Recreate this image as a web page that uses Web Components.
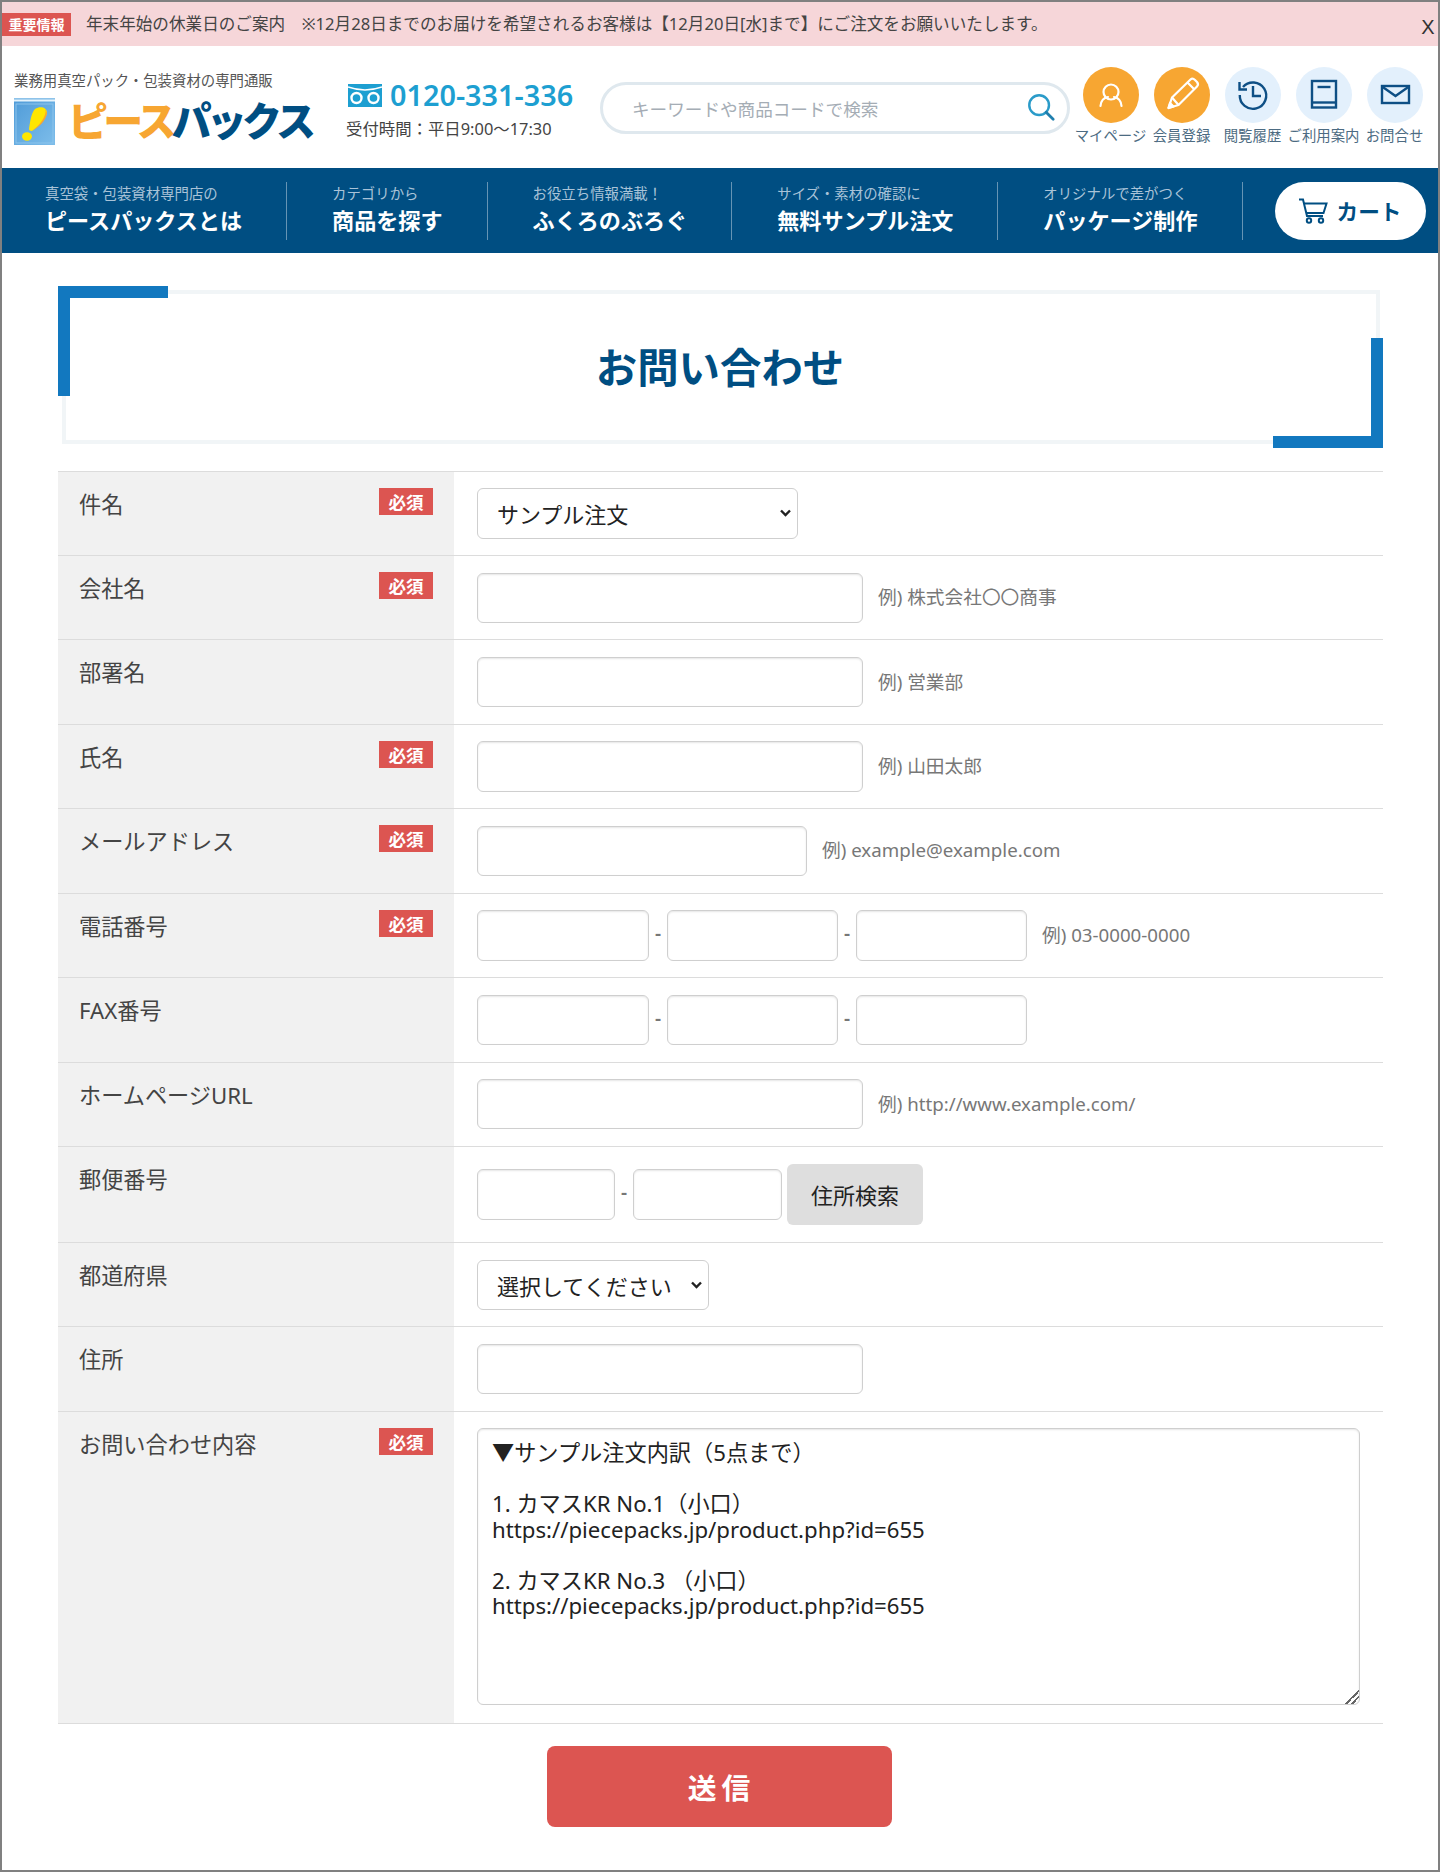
<!DOCTYPE html>
<html lang="ja">
<head>
<meta charset="utf-8">
<title>お問い合わせ</title>
<style>
   html, body { margin: 0; padding: 0; background: #fff; }
   body {
      box-sizing: border-box;
      width: 1440px;
      height: 1872px;
      border: 2px solid #808080;
      overflow: hidden;
      font-family: "Noto Sans", "Noto Sans CJK JP", sans-serif;
      color: #444;
   }
   main { display: block; padding: 33px 55px 0 56px; }
</style>
</head>
<body>
<pp-notice>
   <span slot="badge">重要情報</span>
   年末年始の休業日のご案内　※12月28日までのお届けを希望されるお客様は【12月20日[水]まで】にご注文をお願いいたします。
</pp-notice>

<pp-header></pp-header>

<pp-nav>
   <pp-nav-item first small="真空袋・包装資材専門店の">ピースパックスとは</pp-nav-item>
   <pp-nav-item small="カテゴリから">商品を探す</pp-nav-item>
   <pp-nav-item small="お役立ち情報満載！">ふくろのぶろぐ</pp-nav-item>
   <pp-nav-item small="サイズ・素材の確認に">無料サンプル注文</pp-nav-item>
   <pp-nav-item small="オリジナルで差がつく">パッケージ制作</pp-nav-item>
</pp-nav>

<main>
   <pp-title>お問い合わせ</pp-title>

   <pp-table>
      <pp-row label="件名" required>
         <pp-select style="--w:321px" value="サンプル注文"></pp-select>
      </pp-row>
      <pp-row label="会社名" required>
         <pp-input style="--w:386px"></pp-input><pp-hint>例) 株式会社〇〇商事</pp-hint>
      </pp-row>
      <pp-row label="部署名">
         <pp-input style="--w:386px"></pp-input><pp-hint>例) 営業部</pp-hint>
      </pp-row>
      <pp-row label="氏名" required>
         <pp-input style="--w:386px"></pp-input><pp-hint>例) 山田太郎</pp-hint>
      </pp-row>
      <pp-row label="メールアドレス" required>
         <pp-input style="--w:330px"></pp-input><pp-hint>例) example@example.com</pp-hint>
      </pp-row>
      <pp-row label="電話番号" required>
         <pp-input style="--w:172px"></pp-input><pp-sep>-</pp-sep><pp-input style="--w:171px"></pp-input><pp-sep>-</pp-sep><pp-input style="--w:171px"></pp-input><pp-hint>例) 03-0000-0000</pp-hint>
      </pp-row>
      <pp-row label="FAX番号">
         <pp-input style="--w:172px"></pp-input><pp-sep>-</pp-sep><pp-input style="--w:171px"></pp-input><pp-sep>-</pp-sep><pp-input style="--w:171px"></pp-input>
      </pp-row>
      <pp-row label="ホームページURL">
         <pp-input style="--w:386px"></pp-input><pp-hint>例) http://www.example.com/</pp-hint>
      </pp-row>
      <pp-row label="郵便番号">
         <pp-input style="--w:138px"></pp-input><pp-sep>-</pp-sep><pp-input style="--w:149px"></pp-input><pp-search-button>住所検索</pp-search-button>
      </pp-row>
      <pp-row label="都道府県">
         <pp-select style="--w:232px" value="選択してください"></pp-select>
      </pp-row>
      <pp-row label="住所">
         <pp-input style="--w:386px"></pp-input>
      </pp-row>
      <pp-row label="お問い合わせ内容" required last>
         <pp-textarea></pp-textarea>
      </pp-row>
   </pp-table>

   <pp-submit>送信</pp-submit>
</main>

<script>
const JP = `"Noto Sans", "Noto Sans CJK JP", sans-serif`;

function define(name, html, init) {
   const tmpl = document.createElement("template");
   tmpl.innerHTML = html;
   customElements.define(name, class extends HTMLElement {
      constructor() {
         super();
         this.attachShadow({ mode: "open" });
         this.shadowRoot.appendChild(tmpl.content.cloneNode(true));
      }
      connectedCallback() {
         if (init) init(this, this.shadowRoot);
      }
   });
}

define("pp-notice", `
   <style>
      :host {
         display: flex;
         align-items: center;
         box-sizing: border-box;
         height: 44px;
         padding-bottom: 2px;
         background: #f6d6d9;
         color: #444;
         font-size: 16.6px;
         white-space: nowrap;
         position: relative;
      }
      ::slotted([slot=badge]) {
         display: flex;
         align-items: center;
         justify-content: center;
         width: 69px;
         height: 23px;
         margin-top: 2px;
         margin-right: 15px;
         background: #dc5551;
         color: #fff;
         font-size: 14px;
         font-weight: 700;
      }
      button {
         position: absolute;
         right: 0;
         top: 10px;
         width: 20px;
         height: 30px;
         padding: 0;
         border: 0;
         background: none;
         color: #333;
         font: 400 20px "Liberation Sans", sans-serif;
      }
   </style>
   <slot name="badge"></slot><slot></slot><button>X</button>
`);

define("pp-icon-link", `
   <style>
      :host { display: flex; flex-direction: column; align-items: center; width: 71px; }
      .disc {
         display: flex;
         width: 56px;
         height: 56px;
         border-radius: 50%;
         background: #e3f0fc;
      }
      :host([hot]) .disc { background: #f7a632; }
      .label {
         margin-top: 3px;
         font-size: 14.4px;
         line-height: 20px;
         color: #4c6b82;
         white-space: nowrap;
      }
   </style>
   <div class="disc"><slot name="icon"></slot></div>
   <div class="label"><slot></slot></div>
`);

define("pp-header", `
   <style>
      :host {
         display: flex;
         align-items: center;
         height: 122px;
         padding-left: 12px;
      }
      .brand { width: 332px; margin-top: 1px; }
      .tag { font-size: 14.4px; line-height: 20px; color: #555; white-space: nowrap; }
      .logo { display: flex; align-items: center; height: 47px; margin-top: 7px; }
      .logo svg { display: block; flex: none; }
      .name {
         margin-left: 13px;
         margin-bottom: 4px;
         font: 900 40px/47px "Noto Sans CJK JP", sans-serif;
         letter-spacing: -4.8px;
         white-space: nowrap;
      }
      .name b { font-weight: 900; color: #f7a632; }
      .name i { font-style: normal; color: #004e82; }
      .phone { width: 254px; margin-top: 6px; }
      .tel { display: flex; align-items: center; gap: 8px; margin-left: 2px; height: 32px; }
      .tel span { font-size: 28.8px; font-weight: 600; line-height: 32px; color: #1d9fd1; white-space: nowrap; }
      .hours { margin-top: 6px; font-size: 16.4px; line-height: 24px; color: #444; white-space: nowrap; }
      .search {
         box-sizing: border-box;
         display: flex;
         align-items: center;
         width: 470px;
         height: 52px;
         margin-top: 2px;
         padding: 0 11px 0 29px;
         border: 3px solid #dfe8ee;
         border-radius: 26px;
         background: #fff;
      }
      input {
         flex: 1;
         min-width: 0;
         margin-top: 2px;
         padding: 0;
         border: 0;
         outline: 0;
         background: none;
         font: 400 17.6px ${JP};
      }
      input::placeholder { color: #a5adb5; opacity: 1; }
      .search svg { margin-top: -2px; }
      .icons { display: flex; margin-left: 5px; margin-top: -2px; }
   </style>
   <div class="brand">
      <div class="tag">業務用真空パック・包装資材の専門通販</div>
      <div class="logo">
         <svg width="41" height="47" viewBox="0 0 41 47">
            <defs>
               <linearGradient id="bag" x1="0" y1="0" x2="1" y2="1">
                  <stop offset="0" stop-color="#4f9bd8"/>
                  <stop offset="1" stop-color="#7dbdea"/>
               </linearGradient>
            </defs>
            <rect x="0" y="0" width="41" height="47" fill="url(#bag)"/>
            <rect x="0" y="0" width="41" height="1.5" fill="#8ec3ea"/>
            <rect x="0" y="1.5" width="41" height="2" fill="#e6f3fb"/>
            <rect x="2" y="6" width="37" height="39" fill="none" stroke="#8cc4ec" stroke-width="1"/>
            <path d="M21 11 C26 8 33 9 33 15 C32 21 24 29 18 33 C16 33 15 32 15 31 C16 25 17 15 21 11 Z" fill="#ffe600"/>
            <path d="M31.5 11 C33 18 25 28 18 33 C24 30 32 23 33 15 Z" fill="#f7a632"/>
            <ellipse cx="13" cy="38.5" rx="5" ry="4.2" fill="#ffe600"/>
         </svg>
         <div class="name"><b>ピース</b><i>パックス</i></div>
      </div>
   </div>
   <div class="phone">
      <div class="tel">
         <svg width="34" height="23" viewBox="0 0 34 23">
            <rect width="34" height="23" fill="#1d9fd1"/>
            <path d="M0 3 Q17 9 34 3" fill="none" stroke="#fff" stroke-width="1.6"/>
            <circle cx="8.5" cy="14" r="5" fill="none" stroke="#fff" stroke-width="2.4"/>
            <circle cx="25.5" cy="14" r="5" fill="none" stroke="#fff" stroke-width="2.4"/>
         </svg>
         <span>0120-331-336</span>
      </div>
      <div class="hours">受付時間：平日9:00～17:30</div>
   </div>
   <div class="search">
      <input placeholder="キーワードや商品コードで検索">
      <svg width="30" height="30" viewBox="0 0 32 32" fill="none">
         <circle cx="14" cy="14" r="10.5" stroke="#2a9bc9" stroke-width="2.6"/>
         <path d="M21.5 21.5 L29 29" stroke="#1f7fae" stroke-width="3" stroke-linecap="round"/>
      </svg>
   </div>
   <div class="icons">
      <pp-icon-link hot>
         <svg slot="icon" width="56" height="56" viewBox="0 0 56 56" fill="none" stroke="#fff" stroke-width="2.2" stroke-linecap="round">
            <circle cx="28" cy="25" r="7.5"/>
            <path d="M17.5 39 C18 33 22 30.5 25 30 M38.5 39 C38 33 34 30.5 31 30"/>
         </svg>マイページ</pp-icon-link>
      <pp-icon-link hot>
         <svg slot="icon" width="56" height="56" viewBox="0 0 56 56" fill="none" stroke="#fff" stroke-width="2.2" stroke-linejoin="round">
            <path d="M14.5 41 L18 30.5 L36.5 12.5 Q38.5 10.5 41 13 L43 15 Q45 17.5 43 19.5 L24.5 38 Z"/>
            <path d="M14.5 41 L16 36 L19.5 39.5 Z" fill="#fff"/>
            <path d="M18 30.5 L24.5 38 M33.5 15.5 L40 22"/>
         </svg>会員登録</pp-icon-link>
      <pp-icon-link>
         <svg slot="icon" width="56" height="56" viewBox="0 0 56 56" fill="none" stroke="#0e4f85" stroke-width="2.4">
            <path d="M18 20 A13.2 13.2 0 1 1 14.8 28"/>
            <path d="M14.5 15 V22.5 H22"/>
            <path d="M28 19 V29 H36"/>
         </svg>閲覧履歴</pp-icon-link>
      <pp-icon-link>
         <svg slot="icon" width="56" height="56" viewBox="0 0 56 56" fill="none" stroke="#0e4f85" stroke-width="2.4">
            <rect x="16" y="14" width="24" height="26.5"/>
            <path d="M21.5 20 H34.5"/>
            <path d="M16 35.5 H40"/>
         </svg>ご利用案内</pp-icon-link>
      <pp-icon-link>
         <svg slot="icon" width="56" height="56" viewBox="0 0 56 56" fill="none" stroke="#0e4f85" stroke-width="2.4">
            <rect x="15" y="19" width="27" height="17"/>
            <path d="M15 19.5 L28.5 29 L42 19.5"/>
         </svg>お問合せ</pp-icon-link>
   </div>
`);

define("pp-nav", `
   <style>
      :host {
         display: flex;
         align-items: center;
         height: 85px;
         background: #004e82;
         position: relative;
      }
      .cart {
         box-sizing: border-box;
         display: flex;
         align-items: center;
         gap: 9px;
         width: 151px;
         height: 58px;
         margin-left: 32px;
         padding-left: 23px;
         border-radius: 29px;
         background: #fff;
         color: #004e82;
         font-size: 21.6px;
         font-weight: 700;
         white-space: nowrap;
      }
   </style>
   <slot></slot>
   <div class="cart">
      <svg width="30" height="26" viewBox="0 0 30 26" fill="none" stroke="#004e82" stroke-width="2">
         <path d="M1 1.5 H5 L9 18 H25"/>
         <path d="M6 5.5 H28.5 L25.5 15 H8"/>
         <circle cx="11" cy="22.5" r="2.2"/>
         <circle cx="23" cy="22.5" r="2.2"/>
      </svg>
      カート
   </div>
`);

define("pp-nav-item", `
   <style>
      :host {
         box-sizing: border-box;
         display: block;
         height: 58px;
         padding: 0 44px 0 45px;
         border-right: 1px solid rgba(255, 255, 255, .4);
         white-space: nowrap;
      }
      :host([first]) { padding-left: 43px; }
      .small { font-size: 14.4px; line-height: 24px; color: #a9c3d8; }
      .big { margin-top: -1.5px; font-size: 22.1px; line-height: 32px; font-weight: 700; color: #fff; }
   </style>
   <div class="small"></div>
   <div class="big"><slot></slot></div>
`, (el, root) => {
   root.querySelector(".small").textContent = el.getAttribute("small");
});

define("pp-title", `
   <style>
      :host {
         display: block;
         position: relative;
         box-sizing: border-box;
         height: 162px;
         padding: 4px;
      }
      .frame {
         box-sizing: border-box;
         display: flex;
         align-items: center;
         justify-content: center;
         height: 154px;
         margin-right: -1px;
         padding: 0 2px 4px 0;
         border: 4px solid #f1f5f7;
         color: #004e82;
         font-size: 41.4px;
         font-weight: 700;
      }
      .corner { position: absolute; width: 110px; height: 110px; border: 0 solid #1278bf; box-sizing: border-box; }
      .tl { left: 0; top: 0; border-width: 12.5px 0 0 12.5px; }
      .br { right: 0; bottom: 0; border-width: 0 12.5px 12.5px 0; }
   </style>
   <div class="frame"><slot></slot></div>
   <div class="corner tl"></div>
   <div class="corner br"></div>
`);

define("pp-table", `
   <style>
      :host { display: block; margin-top: 22.6px; }
   </style>
   <slot></slot>
`);

define("pp-row", `
   <style>
      :host {
         display: grid;
         grid-template-columns: 396px 1fr;
         border-top: 1px solid #dcdcdc;
      }
      :host([last]) { border-bottom: 1px solid #dcdcdc; }
      .head {
         display: flex;
         justify-content: space-between;
         align-items: flex-start;
         box-sizing: border-box;
         padding: 16px 21px 0;
         background: #f1f1f1;
      }
      .label { margin-top: 1px; font-size: 22.2px; line-height: 32px; color: #444; white-space: nowrap; }
      .req {
         display: flex;
         align-items: center;
         justify-content: center;
         width: 54px;
         height: 27px;
         background: #dc5551;
         color: #fff;
         font-size: 17.5px;
         font-weight: 700;
      }
      .value {
         display: flex;
         align-items: center;
         padding: 16.52px 23px;
      }
      :host([last]) .value { padding-bottom: 17.5px; }
   </style>
   <div class="head"><span class="label"></span><span class="req">必須</span></div>
   <div class="value"><slot></slot></div>
`, (el, root) => {
   root.querySelector(".label").textContent = el.getAttribute("label");
   if (!el.hasAttribute("required")) root.querySelector(".req").remove();
});

const fieldStyle = `
   box-sizing: border-box;
   display: block;
   width: 100%;
   border: 1px solid #cfcfcf;
   border-radius: 6px;
   background: #fff;
   color: #222;
   outline: 0;
`;

define("pp-input", `
   <style>
      :host { display: block; flex: none; width: var(--w); }
      input { ${fieldStyle} height: 50.4px; padding: 0 12px; box-shadow: inset 0 1px 2px rgba(0, 0, 0, .1); font: 400 21.6px ${JP}; }
   </style>
   <input type="text">
`);

define("pp-select", `
   <style>
      :host { display: block; position: relative; flex: none; width: var(--w); }
      select { ${fieldStyle} appearance: none; height: 50.4px; padding: 2px 10px 0 19px; font: 400 22px ${JP}; }
      svg { position: absolute; right: 7px; top: 21px; pointer-events: none; }
   </style>
   <select><option></option></select>
   <svg width="11" height="8" viewBox="0 0 11 8" fill="none" stroke="#222" stroke-width="2.4"><path d="M1 1.5 L5.5 6 L10 1.5"/></svg>
`, (el, root) => {
   root.querySelector("option").textContent = el.getAttribute("value");
});

define("pp-textarea", `
   <style>
      :host { display: block; flex: 1; }
      textarea {
         ${fieldStyle}
         height: 277px;
         padding: 10.5px 14px 8px;
         box-shadow: inset 0 1px 2px rgba(0, 0, 0, .1);
         color: #222;
         font: 400 22.2px/25.6px ${JP};
      }
      textarea::-webkit-resizer {
         background: linear-gradient(135deg, transparent 52%, #666 52%, #666 60%, transparent 60%, transparent 72%, #666 72%, #666 80%, transparent 80%);
      }
   </style>
   <textarea>▼サンプル注文内訳（5点まで）

1. カマスKR No.1（小口）
https://piecepacks.jp/product.php?id=655

2. カマスKR No.3 （小口）
https://piecepacks.jp/product.php?id=655</textarea>
`);

define("pp-hint", `
   <style>
      :host { display: block; margin-left: 15px; padding-bottom: 1px; font-size: 18.7px; line-height: 24px; color: #777; white-space: nowrap; }
   </style>
   <slot></slot>
`);

define("pp-sep", `
   <style>
      :host { display: block; flex: none; width: 18px; padding-bottom: 4px; text-align: center; font-size: 19px; font-weight: 600; color: #777; }
   </style>
   <slot></slot>
`);

define("pp-search-button", `
   <style>
      :host {
         display: flex;
         flex: none;
         align-items: center;
         justify-content: center;
         width: 136px;
         height: 61px;
         margin: 0.5px 0 0.5px 5px;
         border-radius: 6px;
         background: #dedede;
         color: #222;
         font-size: 22px;
         white-space: nowrap;
      }
   </style>
   <slot></slot>
`);

define("pp-submit", `
   <style>
      :host {
         display: flex;
         align-items: center;
         justify-content: center;
         box-sizing: border-box;
         width: 345px;
         height: 81px;
         margin: 22px 0 0 489px;
         padding: 0 0 0 4px;
         border-radius: 8px;
         background: #dc5551;
         color: #fff;
         font-size: 28.8px;
         font-weight: 700;
         letter-spacing: 5px;
      }
   </style>
   <slot></slot>
`);
</script>
</body>
</html>
